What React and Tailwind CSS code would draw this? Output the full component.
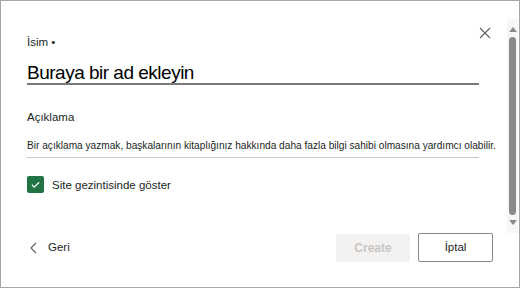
export default function App() {
  return (
    <div className="w-[520px] h-[288px] bg-white border border-[#a6a6a6] flex relative overflow-hidden" style={{ fontFamily: '"Liberation Sans", Arial, sans-serif' }}>
      <div className="flex flex-col pl-[26px] pt-[33px] pb-[25px]">
        <div className="w-[452px] flex flex-col">
          <label className="text-[11.5px] leading-[16px] text-[#201f1e]">İsim •</label>
          <div className="mt-[12px] border-b-2 border-[#7a7a7a] text-[19px] leading-[21px] tracking-[-0.5px] text-black">
            Buraya bir ad ekleyin
          </div>

          <label className="mt-[24px] text-[11.5px] leading-[16px] text-[#201f1e]">Açıklama</label>
          <div className="mt-[14px] border-b border-[#c8c8c8] pb-[4px] whitespace-nowrap text-[10.15px] leading-[14px] text-[#201f1e]">
            Bir açıklama yazmak, başkalarının kitaplığınız hakkında daha fazla bilgi sahibi olmasına yardımcı olabilir.
          </div>

          <div className="mt-[18px] flex items-center gap-[8px]">
            <span className="w-[17px] h-[17px] rounded-[2px] bg-[#217346] flex items-center justify-center">
              <svg width="11" height="11" viewBox="0 0 12 12" fill="none" stroke="white" strokeWidth="1.3">
                <path d="M2 6.3l2.6 2.6L10 3.5" />
              </svg>
            </span>
            <span className="text-[11.5px] leading-[16px] text-[#201f1e]">Site gezintisinde göster</span>
          </div>
        </div>

        <div className="mt-auto w-[466px] flex items-center">
          <button className="flex items-center gap-[9px] pl-[2px] text-[11.5px] text-[#201f1e]">
            <svg width="10" height="12" viewBox="0 0 10 12" fill="none" stroke="#605e5c" strokeWidth="1.1">
              <path d="M7 1L2 6l5 5" />
            </svg>
            Geri
          </button>
          <div className="ml-auto flex items-center gap-[8px]">
            <button className="w-[74px] h-[28px] rounded-[2px] bg-[#f3f2f1] text-[12px] font-semibold text-[#c8c6c4]">Create</button>
            <button className="w-[75px] h-[29px] rounded-[2px] border border-[#8a8886] text-[11.5px] text-[#201f1e]">İptal</button>
          </div>
        </div>
      </div>

      <button className="absolute left-[478px] top-[26px] w-[12px] h-[12px]">
        <svg width="12" height="12" viewBox="0 0 12 12" fill="none" stroke="#605e5c" strokeWidth="1.1">
          <path d="M1 1l10 10M11 1L1 11" />
        </svg>
      </button>

      <div className="absolute right-[1px] top-[18px] w-[11px] h-[214px] bg-[#f7f7f7] flex flex-col items-center">
        <svg width="8" height="5" viewBox="0 0 8 5" className="mt-[8px]"><path d="M0 5L4 0l4 5z" fill="#8a8a8a" /></svg>
        <div className="mt-[5px] w-[7px] flex-1 rounded-full bg-[#8a8a8a]"></div>
        <svg width="8" height="5" viewBox="0 0 8 5" className="mt-[5px] mb-[8px]"><path d="M0 0l4 5 4-5z" fill="#8a8a8a" /></svg>
      </div>
    </div>
  );
}
